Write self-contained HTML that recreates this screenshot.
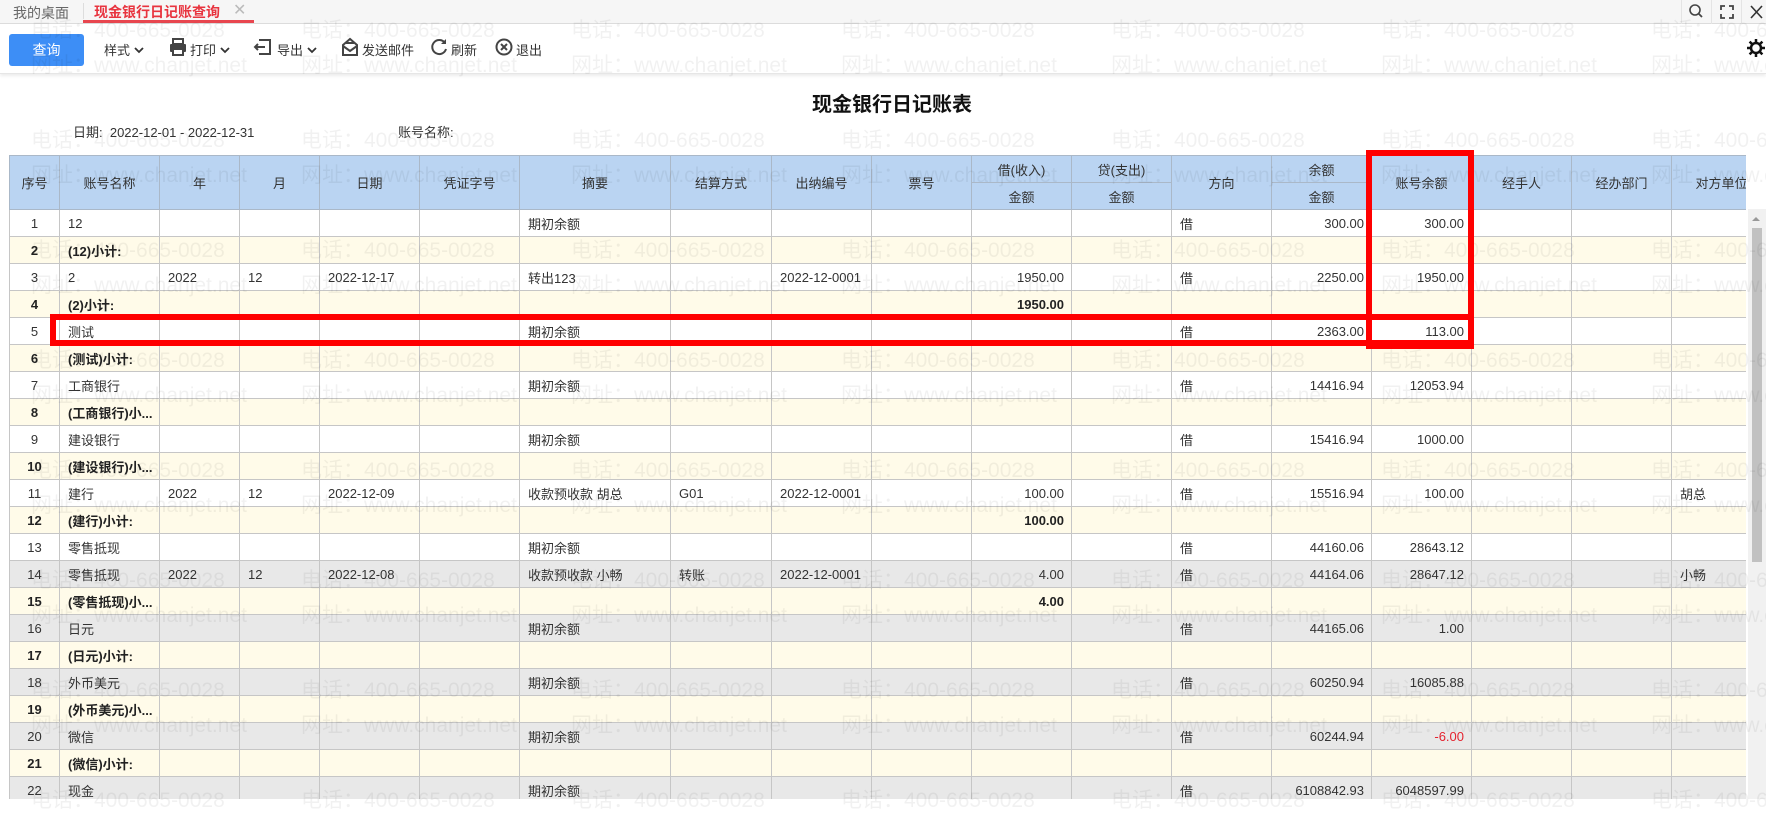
<!DOCTYPE html>
<html><head><meta charset="utf-8">
<style>
*{margin:0;padding:0;box-sizing:border-box}
body{width:1766px;height:799px;overflow:hidden;background:#fff;font-family:"Liberation Sans","Noto Sans CJK SC",sans-serif;color:#333;position:relative;font-size:13px}
.tabbar{position:absolute;left:0;top:0;width:1766px;height:24px;background:#f6f6f6;border-bottom:1px solid #dcdcdc}
.tab1{position:absolute;left:13px;top:3px;font-size:14px;color:#666}
.tabsep{position:absolute;left:83px;top:3px;width:1px;height:16px;background:#ddd}
.tab2{position:absolute;left:83px;top:0;width:171px;height:23px;border-bottom:3px solid #e8464f;}
.tab2 span{position:absolute;left:11px;top:2px;font-size:14px;color:#e8343f;font-weight:bold}
.tab2 i{position:absolute;left:150px;top:0px;font-style:normal;color:#bbb;font-size:16px}
.tr-ic{position:absolute;top:0;height:24px;width:30px;border-left:1px solid #e4e4e4}
.toolbar{position:absolute;left:0;top:24px;width:1766px;height:50px;background:#fff;box-shadow:0 2px 3px rgba(0,0,0,.08);border-bottom:1px solid #e6e6e6}
.btn{position:absolute;left:9px;top:10px;width:75px;height:32px;background:#3d8ef6;border-radius:3px;color:#fff;font-size:14px;text-align:center;line-height:32px}
.ti{position:absolute;top:16px;font-size:13px;color:#333}
.title{position:absolute;left:0;width:1766px;top:88px;text-align:center;font-size:20px;font-weight:bold;color:#111;padding-left:10px}
.title span{position:absolute;left:812px}
.info{position:absolute;top:122px;font-size:13px;color:#333}
.wrap{position:absolute;left:9px;top:155px;width:1737px;height:644px;overflow:hidden}
table{border-collapse:collapse;table-layout:fixed;width:1762px}
td,th{border:1px solid #c6c6c6;height:27px;padding:0 8px;white-space:nowrap;overflow:hidden;font-weight:normal;font-size:13px}
th{background:#bad4f2;color:#333;text-align:center;border-color:#aab8c8}
td.c{text-align:center;padding:0}
td.r{text-align:right;padding-right:7px}
tr.s td{background:#fffbe9;font-weight:bold;color:#222}
tr.g td{background:#e8e8e8}
.red{color:#e4232f}
.wm{position:absolute;left:0;top:0;width:1766px;height:799px;pointer-events:none;z-index:5}
.wl{position:absolute;left:31px;white-space:nowrap;font-size:21px;color:rgba(0,0,0,.055)}
.wl span{display:inline-block;width:270px}
.rb{position:absolute;border:6px solid #f00;z-index:6}
.sb{position:absolute;left:1748px;top:209px;width:18px;height:590px;background:#f1f1f1}
.thumb{position:absolute;left:1752px;top:228px;width:10px;height:334px;background:#c1c1c1}
</style></head><body>
<div class="tabbar">
 <div class="tab1">我的桌面</div><div class="tabsep"></div>
 <div class="tab2"><span>现金银行日记账查询</span><i>✕</i></div>
 <div class="tr-ic" style="left:1681px"><svg width="30" height="24"><circle cx="13" cy="10" r="5" fill="none" stroke="#444" stroke-width="1.6"/><line x1="17" y1="14" x2="20" y2="17" stroke="#444" stroke-width="1.8"/></svg></div>
 <div class="tr-ic" style="left:1711px"><svg width="30" height="24"><path d="M9 10V6h4M17 6h4v4M21 14v4h-4M13 18H9v-4" fill="none" stroke="#444" stroke-width="1.8"/></svg></div>
 <div class="tr-ic" style="left:1741px"><svg width="25" height="24"><path d="M9 6l11 12M20 6L9 18" stroke="#333" stroke-width="1.6"/></svg></div>
</div>
<div class="toolbar">
 <div class="btn">查询</div>
 <div class="ti" style="left:104px">样式<svg width="12" height="10" style="margin-left:3px"><path d="M2 3l4 4 4-4" fill="none" stroke="#333" stroke-width="1.8"/></svg></div>
 <svg style="position:absolute;left:168px;top:13px" width="20" height="20"><rect x="5" y="2" width="10" height="5" fill="none" stroke="#444" stroke-width="2"/><rect x="2" y="7" width="16" height="8" rx="1" fill="#444"/><rect x="5" y="12" width="10" height="6" fill="#fff" stroke="#444" stroke-width="2"/></svg>
 <div class="ti" style="left:190px">打印<svg width="12" height="10" style="margin-left:3px"><path d="M2 3l4 4 4-4" fill="none" stroke="#333" stroke-width="1.8"/></svg></div>
 <svg style="position:absolute;left:253px;top:13px" width="20" height="20"><path d="M6 3h11v14H6" fill="none" stroke="#444" stroke-width="2"/><path d="M2 10h10M5 7l-3 3 3 3" fill="none" stroke="#444" stroke-width="2"/></svg>
 <div class="ti" style="left:277px">导出<svg width="12" height="10" style="margin-left:3px"><path d="M2 3l4 4 4-4" fill="none" stroke="#333" stroke-width="1.8"/></svg></div>
 <svg style="position:absolute;left:340px;top:13px" width="20" height="20"><path d="M3 8l7-6 7 6v10H3z" fill="none" stroke="#444" stroke-width="2"/><path d="M3 9l7 5 7-5M6 6h8" fill="none" stroke="#444" stroke-width="2"/></svg>
 <div class="ti" style="left:362px">发送邮件</div>
 <svg style="position:absolute;left:429px;top:13px" width="20" height="20"><path d="M16 6A7 7 0 1 0 17 12" fill="none" stroke="#444" stroke-width="2"/><path d="M17 2v5h-5" fill="#444"/></svg>
 <div class="ti" style="left:451px">刷新</div>
 <svg style="position:absolute;left:494px;top:13px" width="20" height="20"><circle cx="10" cy="10" r="7.5" fill="none" stroke="#444" stroke-width="2"/><path d="M7 7l6 6M13 7l-6 6" stroke="#444" stroke-width="2"/></svg>
 <div class="ti" style="left:516px">退出</div>
 <svg style="position:absolute;left:1746px;top:14px" width="20" height="20"><circle cx="10" cy="10" r="5" fill="none" stroke="#111" stroke-width="2.5"/><path d="M10 1v4M10 15v4M1 10h4M15 10h4M3.6 3.6l2.8 2.8M13.6 13.6l2.8 2.8M3.6 16.4l2.8-2.8M13.6 6.4l2.8-2.8" stroke="#111" stroke-width="2.5"/></svg>
</div>
<div class="title"><span>现金银行日记账表</span></div>
<div class="info" style="left:73px">日期:&nbsp;&nbsp;2022-12-01 - 2022-12-31</div>
<div class="info" style="left:398px">账号名称:</div>

<div class="wrap"><table>
<colgroup><col style="width:50px"><col style="width:100px"><col style="width:80px"><col style="width:80px"><col style="width:100px"><col style="width:100px"><col style="width:151px"><col style="width:101px"><col style="width:100px"><col style="width:100px"><col style="width:100px"><col style="width:100px"><col style="width:100px"><col style="width:100px"><col style="width:100px"><col style="width:100px"><col style="width:100px"><col style="width:100px"></colgroup>
<tr><th rowspan="2">序号</th><th rowspan="2">账号名称</th><th rowspan="2">年</th><th rowspan="2">月</th><th rowspan="2">日期</th><th rowspan="2">凭证字号</th><th rowspan="2">摘要</th><th rowspan="2">结算方式</th><th rowspan="2">出纳编号</th><th rowspan="2">票号</th><th>借(收入)</th><th>贷(支出)</th><th rowspan="2">方向</th><th>余额</th><th rowspan="2">账号余额</th><th rowspan="2">经手人</th><th rowspan="2">经办部门</th><th rowspan="2">对方单位</th></tr>
<tr><th>金额</th><th>金额</th><th>金额</th></tr>
<tr><td class="c">1</td><td>12</td><td></td><td></td><td></td><td></td><td>期初余额</td><td></td><td></td><td></td><td class="r"></td><td class="r"></td><td>借</td><td class="r">300.00</td><td class="r">300.00</td><td></td><td></td><td></td></tr>
<tr class="s"><td class="c">2</td><td>(12)小计:</td><td></td><td></td><td></td><td></td><td></td><td></td><td></td><td></td><td></td><td></td><td></td><td></td><td></td><td></td><td></td><td></td></tr>
<tr><td class="c">3</td><td>2</td><td>2022</td><td>12</td><td>2022-12-17</td><td></td><td>转出123</td><td></td><td>2022-12-0001</td><td></td><td class="r">1950.00</td><td></td><td>借</td><td class="r">2250.00</td><td class="r">1950.00</td><td></td><td></td><td></td></tr>
<tr class="s"><td class="c">4</td><td>(2)小计:</td><td></td><td></td><td></td><td></td><td></td><td></td><td></td><td></td><td class="r">1950.00</td><td></td><td></td><td></td><td></td><td></td><td></td><td></td></tr>
<tr><td class="c">5</td><td>测试</td><td></td><td></td><td></td><td></td><td>期初余额</td><td></td><td></td><td></td><td></td><td></td><td>借</td><td class="r">2363.00</td><td class="r">113.00</td><td></td><td></td><td></td></tr>
<tr class="s"><td class="c">6</td><td>(测试)小计:</td><td></td><td></td><td></td><td></td><td></td><td></td><td></td><td></td><td></td><td></td><td></td><td></td><td></td><td></td><td></td><td></td></tr>
<tr><td class="c">7</td><td>工商银行</td><td></td><td></td><td></td><td></td><td>期初余额</td><td></td><td></td><td></td><td></td><td></td><td>借</td><td class="r">14416.94</td><td class="r">12053.94</td><td></td><td></td><td></td></tr>
<tr class="s"><td class="c">8</td><td>(工商银行)小...</td><td></td><td></td><td></td><td></td><td></td><td></td><td></td><td></td><td></td><td></td><td></td><td></td><td></td><td></td><td></td><td></td></tr>
<tr><td class="c">9</td><td>建设银行</td><td></td><td></td><td></td><td></td><td>期初余额</td><td></td><td></td><td></td><td></td><td></td><td>借</td><td class="r">15416.94</td><td class="r">1000.00</td><td></td><td></td><td></td></tr>
<tr class="s"><td class="c">10</td><td>(建设银行)小...</td><td></td><td></td><td></td><td></td><td></td><td></td><td></td><td></td><td></td><td></td><td></td><td></td><td></td><td></td><td></td><td></td></tr>
<tr><td class="c">11</td><td>建行</td><td>2022</td><td>12</td><td>2022-12-09</td><td></td><td>收款预收款 胡总</td><td>G01</td><td>2022-12-0001</td><td></td><td class="r">100.00</td><td></td><td>借</td><td class="r">15516.94</td><td class="r">100.00</td><td></td><td></td><td>胡总</td></tr>
<tr class="s"><td class="c">12</td><td>(建行)小计:</td><td></td><td></td><td></td><td></td><td></td><td></td><td></td><td></td><td class="r">100.00</td><td></td><td></td><td></td><td></td><td></td><td></td><td></td></tr>
<tr><td class="c">13</td><td>零售抵现</td><td></td><td></td><td></td><td></td><td>期初余额</td><td></td><td></td><td></td><td></td><td></td><td>借</td><td class="r">44160.06</td><td class="r">28643.12</td><td></td><td></td><td></td></tr>
<tr class="g"><td class="c">14</td><td>零售抵现</td><td>2022</td><td>12</td><td>2022-12-08</td><td></td><td>收款预收款 小畅</td><td>转账</td><td>2022-12-0001</td><td></td><td class="r">4.00</td><td></td><td>借</td><td class="r">44164.06</td><td class="r">28647.12</td><td></td><td></td><td>小畅</td></tr>
<tr class="s"><td class="c">15</td><td>(零售抵现)小...</td><td></td><td></td><td></td><td></td><td></td><td></td><td></td><td></td><td class="r">4.00</td><td></td><td></td><td></td><td></td><td></td><td></td><td></td></tr>
<tr class="g"><td class="c">16</td><td>日元</td><td></td><td></td><td></td><td></td><td>期初余额</td><td></td><td></td><td></td><td></td><td></td><td>借</td><td class="r">44165.06</td><td class="r">1.00</td><td></td><td></td><td></td></tr>
<tr class="s"><td class="c">17</td><td>(日元)小计:</td><td></td><td></td><td></td><td></td><td></td><td></td><td></td><td></td><td></td><td></td><td></td><td></td><td></td><td></td><td></td><td></td></tr>
<tr class="g"><td class="c">18</td><td>外币美元</td><td></td><td></td><td></td><td></td><td>期初余额</td><td></td><td></td><td></td><td></td><td></td><td>借</td><td class="r">60250.94</td><td class="r">16085.88</td><td></td><td></td><td></td></tr>
<tr class="s"><td class="c">19</td><td>(外币美元)小...</td><td></td><td></td><td></td><td></td><td></td><td></td><td></td><td></td><td></td><td></td><td></td><td></td><td></td><td></td><td></td><td></td></tr>
<tr class="g"><td class="c">20</td><td>微信</td><td></td><td></td><td></td><td></td><td>期初余额</td><td></td><td></td><td></td><td></td><td></td><td>借</td><td class="r">60244.94</td><td class="r red">-6.00</td><td></td><td></td><td></td></tr>
<tr class="s"><td class="c">21</td><td>(微信)小计:</td><td></td><td></td><td></td><td></td><td></td><td></td><td></td><td></td><td></td><td></td><td></td><td></td><td></td><td></td><td></td><td></td></tr>
<tr class="g"><td class="c">22</td><td>现金</td><td></td><td></td><td></td><td></td><td>期初余额</td><td></td><td></td><td></td><td></td><td></td><td>借</td><td class="r">6108842.93</td><td class="r">6048597.99</td><td></td><td></td><td></td></tr>
</table></div>
<div class="sb"></div><div class="thumb"></div>
<svg style="position:absolute;left:1750px;top:214px" width="12" height="10"><path d="M2 7l4-4 4 4z" fill="#999"/></svg>

<div class="rb" style="left:1366px;top:150px;width:108px;height:199px"></div>
<div class="rb" style="left:50px;top:314px;width:1424px;height:32px"></div>

<div class="wm">
<div class="wl" style="top:14px"><span>电话：400-665-0028</span><span>电话：400-665-0028</span><span>电话：400-665-0028</span><span>电话：400-665-0028</span><span>电话：400-665-0028</span><span>电话：400-665-0028</span><span>电话：400-665-0028</span></div>
<div class="wl" style="top:49px"><span>网址：www.chanjet.net</span><span>网址：www.chanjet.net</span><span>网址：www.chanjet.net</span><span>网址：www.chanjet.net</span><span>网址：www.chanjet.net</span><span>网址：www.chanjet.net</span><span>网址：www.chanjet.net</span></div>
<div class="wl" style="top:124px"><span>电话：400-665-0028</span><span>电话：400-665-0028</span><span>电话：400-665-0028</span><span>电话：400-665-0028</span><span>电话：400-665-0028</span><span>电话：400-665-0028</span><span>电话：400-665-0028</span></div>
<div class="wl" style="top:159px"><span>网址：www.chanjet.net</span><span>网址：www.chanjet.net</span><span>网址：www.chanjet.net</span><span>网址：www.chanjet.net</span><span>网址：www.chanjet.net</span><span>网址：www.chanjet.net</span><span>网址：www.chanjet.net</span></div>
<div class="wl" style="top:234px"><span>电话：400-665-0028</span><span>电话：400-665-0028</span><span>电话：400-665-0028</span><span>电话：400-665-0028</span><span>电话：400-665-0028</span><span>电话：400-665-0028</span><span>电话：400-665-0028</span></div>
<div class="wl" style="top:269px"><span>网址：www.chanjet.net</span><span>网址：www.chanjet.net</span><span>网址：www.chanjet.net</span><span>网址：www.chanjet.net</span><span>网址：www.chanjet.net</span><span>网址：www.chanjet.net</span><span>网址：www.chanjet.net</span></div>
<div class="wl" style="top:344px"><span>电话：400-665-0028</span><span>电话：400-665-0028</span><span>电话：400-665-0028</span><span>电话：400-665-0028</span><span>电话：400-665-0028</span><span>电话：400-665-0028</span><span>电话：400-665-0028</span></div>
<div class="wl" style="top:379px"><span>网址：www.chanjet.net</span><span>网址：www.chanjet.net</span><span>网址：www.chanjet.net</span><span>网址：www.chanjet.net</span><span>网址：www.chanjet.net</span><span>网址：www.chanjet.net</span><span>网址：www.chanjet.net</span></div>
<div class="wl" style="top:454px"><span>电话：400-665-0028</span><span>电话：400-665-0028</span><span>电话：400-665-0028</span><span>电话：400-665-0028</span><span>电话：400-665-0028</span><span>电话：400-665-0028</span><span>电话：400-665-0028</span></div>
<div class="wl" style="top:489px"><span>网址：www.chanjet.net</span><span>网址：www.chanjet.net</span><span>网址：www.chanjet.net</span><span>网址：www.chanjet.net</span><span>网址：www.chanjet.net</span><span>网址：www.chanjet.net</span><span>网址：www.chanjet.net</span></div>
<div class="wl" style="top:564px"><span>电话：400-665-0028</span><span>电话：400-665-0028</span><span>电话：400-665-0028</span><span>电话：400-665-0028</span><span>电话：400-665-0028</span><span>电话：400-665-0028</span><span>电话：400-665-0028</span></div>
<div class="wl" style="top:599px"><span>网址：www.chanjet.net</span><span>网址：www.chanjet.net</span><span>网址：www.chanjet.net</span><span>网址：www.chanjet.net</span><span>网址：www.chanjet.net</span><span>网址：www.chanjet.net</span><span>网址：www.chanjet.net</span></div>
<div class="wl" style="top:674px"><span>电话：400-665-0028</span><span>电话：400-665-0028</span><span>电话：400-665-0028</span><span>电话：400-665-0028</span><span>电话：400-665-0028</span><span>电话：400-665-0028</span><span>电话：400-665-0028</span></div>
<div class="wl" style="top:709px"><span>网址：www.chanjet.net</span><span>网址：www.chanjet.net</span><span>网址：www.chanjet.net</span><span>网址：www.chanjet.net</span><span>网址：www.chanjet.net</span><span>网址：www.chanjet.net</span><span>网址：www.chanjet.net</span></div>
<div class="wl" style="top:784px"><span>电话：400-665-0028</span><span>电话：400-665-0028</span><span>电话：400-665-0028</span><span>电话：400-665-0028</span><span>电话：400-665-0028</span><span>电话：400-665-0028</span><span>电话：400-665-0028</span></div>
</div>
</body></html>
